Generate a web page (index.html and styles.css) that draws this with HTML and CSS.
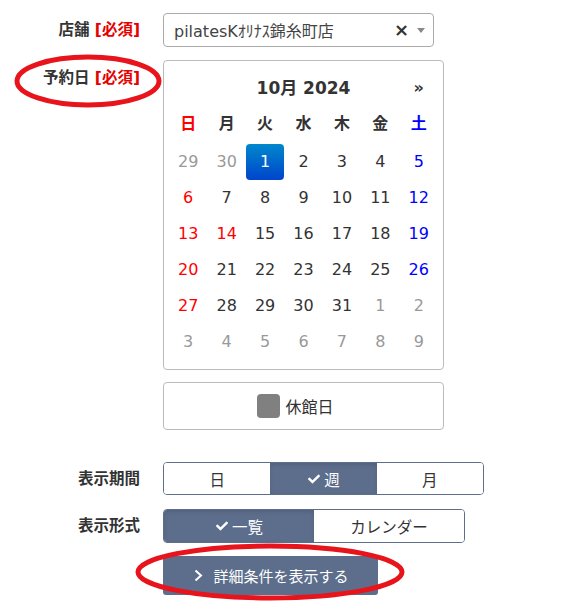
FILE: index.html
```html
<!DOCTYPE html>
<html lang="ja">
<head>
    <meta charset="UTF-8">
    <title>予約検索</title>
    <link rel="stylesheet" href="styles.css">
</head>
<body>
    <div class="search-form">
        <div class="field field-shop">
            <div class="label">店舗 <span class="req">[必須]</span></div>
            <div class="select">
                <span class="select-text">pilatesKｵﾘﾅｽ錦糸町店</span>
                <span class="select-clear">×</span>
                <span class="select-arrow"></span>
            </div>
        </div>

        <div class="field field-date">
            <div class="label label-top">予約日 <span class="req">[必須]</span></div>
            <div>
                <div class="calendar">
                    <div class="cal-head">
                        <span></span>
                        <span class="cal-title">10月 2024</span>
                        <span class="cal-next">»</span>
                    </div>
                    <div class="cal-week">
                        <span class="sun">日</span><span>月</span><span>火</span><span>水</span><span>木</span><span>金</span><span class="sat">土</span>
                    </div>
                    <div class="cal-days" id="calDays"></div>
                </div>
                <div class="legend">
                    <span class="legend-item"><span class="legend-box"></span>休館日</span>
                </div>
            </div>
        </div>

        <div class="field field-period">
            <div class="label">表示期間</div>
            <div class="btn-group period">
                <button class="seg">日</button>
                <button class="seg active"><svg class="check" viewBox="0 0 512 512"><path d="M173.9 439.4l-166.4-166.4c-10-10-10-26.2 0-36.2l36.2-36.2c10-10 26.2-10 36.2 0L192 312.7 432.1 72.6c10-10 26.2-10 36.2 0l36.2 36.2c10 10 10 26.2 0 36.2l-294.4 294.4c-10 10-26.2 10-36.2 0z"/></svg>週</button>
                <button class="seg">月</button>
            </div>
        </div>

        <div class="field field-format">
            <div class="label">表示形式</div>
            <div class="btn-group format">
                <button class="seg active"><svg class="check" viewBox="0 0 512 512"><path d="M173.9 439.4l-166.4-166.4c-10-10-10-26.2 0-36.2l36.2-36.2c10-10 26.2-10 36.2 0L192 312.7 432.1 72.6c10-10 26.2-10 36.2 0l36.2 36.2c10 10 10 26.2 0 36.2l-294.4 294.4c-10 10-26.2 10-36.2 0z"/></svg>一覧</button>
                <button class="seg">カレンダー</button>
            </div>
        </div>

        <div class="field field-detail">
            <div></div>
            <button class="detail-btn"><svg class="chevron" viewBox="0 0 9 13"><polyline points="1.5,1.5 7,6.5 1.5,11.5"/></svg>詳細条件を表示する</button>
        </div>
    </div>

    <!-- red marker circles drawn over the form -->
    <svg class="marks" width="580" height="606" viewBox="0 0 580 606">
        <ellipse cx="88" cy="81" rx="71" ry="24"/>
        <ellipse cx="270" cy="572" rx="132" ry="26"/>
    </svg>

    <script>
        const days = document.getElementById('calDays');
        const cells = [];
        [29, 30].forEach(d => cells.push({ d, muted: true }));
        for (let d = 1; d <= 31; d++) cells.push({ d });
        for (let d = 1; d <= 9; d++) cells.push({ d, muted: true });
        const holidays = [14];

        cells.forEach((c, i) => {
            const el = document.createElement('span');
            el.textContent = c.d;
            if (c.muted) el.className = 'muted';
            else if (c.d === 1) el.className = 'selected';
            else if (i % 7 === 0 || holidays.includes(c.d)) el.className = 'sun';
            else if (i % 7 === 6) el.className = 'sat';
            days.appendChild(el);
        });
    </script>
</body>
</html>
```

FILE: styles.css
```css
body { margin: 0; font-family: "DejaVu Sans", "Noto Sans CJK JP", sans-serif; color: #333; background: #fff; }
.search-form { padding-top: 13px; }
.field { display: grid; grid-template-columns: 140px auto; column-gap: 23px; align-items: center; justify-items: start; }
.field-date { align-items: start; margin-top: 13px; }
.field-period { margin-top: 32px; }
.field-format { margin-top: 14px; }
.field-detail { margin-top: 13px; }
.label { justify-self: end; font-weight: bold; font-size: 15.5px; line-height: 20px; white-space: nowrap; }
.label-top { padding-top: 8px; }
.req { color: #e60000; }

.select { box-sizing: border-box; width: 271px; height: 34px; border: 1px solid #aaa; border-radius: 4px; display: flex; align-items: center; padding: 0 8px 0 10px; font-size: 16px; }
.select-text { flex: 1; color: #444; white-space: nowrap; }
.select-clear { font-weight: bold; font-size: 18px; color: #333; margin-right: 8px; line-height: 1; }
.select-arrow { width: 0; height: 0; border-left: 4px solid transparent; border-right: 4px solid transparent; border-top: 5px solid #888; }

.calendar { box-sizing: border-box; width: 281px; height: 310px; border: 1px solid #bbb; border-radius: 4px; padding: 9px 5px; font-size: 16px; }
.cal-head, .cal-week, .cal-days { display: grid; grid-template-columns: repeat(7, 1fr); text-align: center; }
.cal-head { height: 36px; line-height: 36px; font-weight: bold; }
.cal-title { grid-column: span 5; font-size: 17px; }
.cal-next { font-size: 16px; }
.cal-week { height: 38px; line-height: 36px; font-weight: bold; }
.cal-days span { height: 36px; line-height: 36px; }
.sun { color: #f00; }
.sat { color: #00f; }
.muted { color: #999; }
.selected { color: #fff; border-radius: 4px; background: linear-gradient(#0088cc, #0044cc); }

.legend { box-sizing: border-box; width: 281px; height: 48px; margin-top: 12px; border: 1px solid #bbb; border-radius: 4px; display: flex; align-items: center; justify-content: center; font-size: 16px; }
.legend-item { display: flex; align-items: center; gap: 5px; margin-right: 16px; }
.legend-box { width: 23px; height: 24px; border-radius: 4px; background: #808080; }

.btn-group { display: flex; box-sizing: border-box; border: 1px solid #5d6e8c; border-radius: 4px; overflow: hidden; }
.period { width: 321px; height: 33px; }
.format { width: 302px; height: 34px; }
.seg { flex: 1; display: flex; align-items: center; justify-content: center; gap: 3px; border: none; background: #fff; color: #333; font-family: inherit; font-size: 15.5px; padding: 0; }
.seg.active { background: #5d6e8c; color: #fff; box-shadow: inset 0 2px 4px rgba(0, 0, 0, 0.12); }
.check { width: 14px; height: 12px; fill: #fff; }

.detail-btn { width: 215px; height: 39px; border: none; border-radius: 3px; background: #5d6e8c; color: #fff; font-family: inherit; font-size: 15px; display: flex; align-items: center; justify-content: center; gap: 10px; padding: 0 0 0 2px; }
.chevron { width: 9px; height: 13px; fill: none; stroke: #fff; stroke-width: 2; }

.marks { position: absolute; left: 0; top: 0; pointer-events: none; }
.marks ellipse { fill: none; stroke: #e8141c; stroke-width: 5; }
```
